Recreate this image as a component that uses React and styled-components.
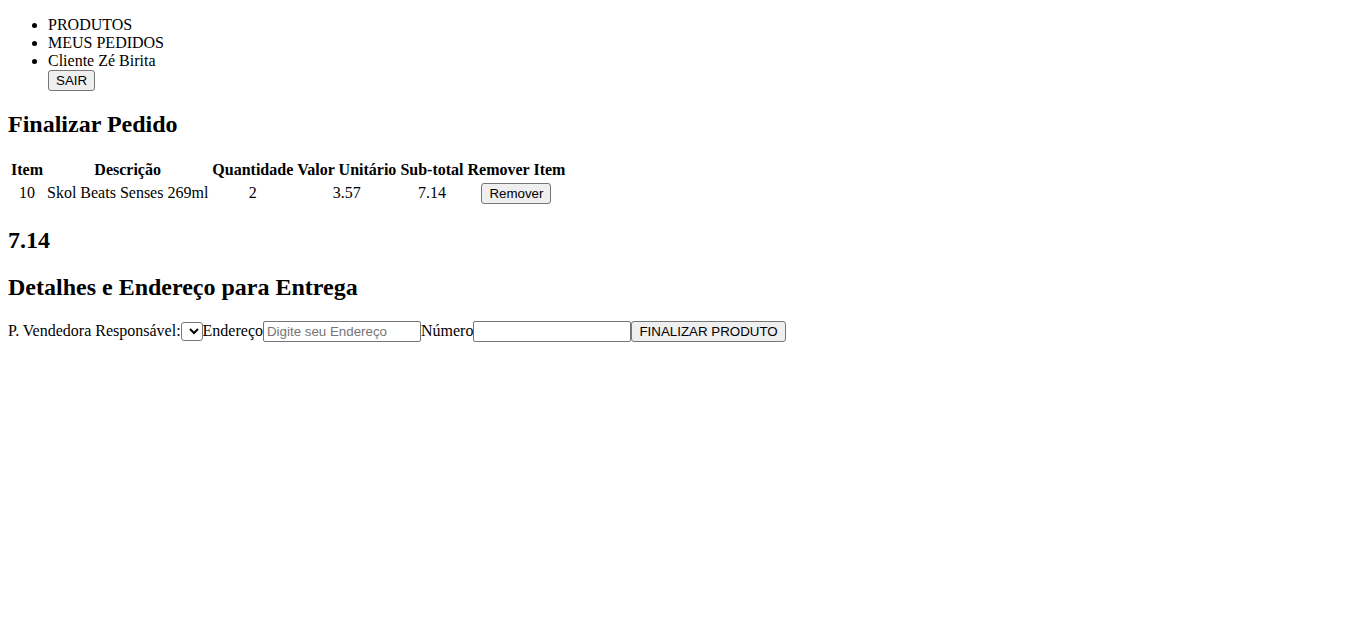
import React from 'react';
import styled, { createGlobalStyle } from 'styled-components';

const GlobalStyle = createGlobalStyle`
  body {
    margin: 8px;
    font-family: "Liberation Serif", "Times New Roman", serif;
    font-size: 16px;
    color: #000;
    background: #fff;
  }
`;

const NavList = styled.ul`
  margin: 8px 0 16px;
  padding-left: 40px;
  list-style: disc;
`;

const NavItem = styled.li`
  line-height: normal;
`;

const Button = styled.button`
  font-family: "Liberation Sans", Arial, sans-serif;
  font-size: 13.333px;
  padding: 2px 7px;
  color: #000;
  background: #efefef;
  border: 1px solid #767676;
  border-radius: 3px;
`;

const Title = styled.h2`
  font-size: 24px;
  font-weight: bold;
  margin: 19.92px 0;
`;

const Table = styled.table`
  border-spacing: 2px;
  border-collapse: separate;

  th {
    padding: 1px;
    font-weight: bold;
    text-align: center;
  }

  td {
    padding: 1px;
    text-align: center;
  }
`;

const Form = styled.div`
  display: block;
`;

const Select = styled.select`
  font-family: "Liberation Sans", Arial, sans-serif;
  font-size: 13.333px;
  border: 1px solid #767676;
  border-radius: 3px;
  background: #fff;
`;

const Input = styled.input`
  font-family: "Liberation Sans", Arial, sans-serif;
  font-size: 13.333px;
  width: 150px;
  padding: 2px 3px;
  border: 1px solid #767676;
  border-radius: 2px;
  &::placeholder {
    color: #757575;
  }
`;

const items = [
  { id: 10, description: 'Skol Beats Senses 269ml', quantity: 2, price: '3.57', subtotal: '7.14' },
];

const App = () => {
  return (
    <>
      <GlobalStyle />
      <NavList>
        <NavItem>PRODUTOS</NavItem>
        <NavItem>MEUS PEDIDOS</NavItem>
        <NavItem>
          Cliente Zé Birita
          <div>
            <Button type="button">SAIR</Button>
          </div>
        </NavItem>
      </NavList>
      <Title>Finalizar Pedido</Title>
      <Table>
        <thead>
          <tr>
            <th>Item</th>
            <th>Descrição</th>
            <th>Quantidade</th>
            <th>Valor Unitário</th>
            <th>Sub-total</th>
            <th>Remover Item</th>
          </tr>
        </thead>
        <tbody>
          {items.map(item => (
            <tr key={item.id}>
              <td>{item.id}</td>
              <td>{item.description}</td>
              <td>{item.quantity}</td>
              <td>{item.price}</td>
              <td>{item.subtotal}</td>
              <td>
                <Button type="button">Remover</Button>
              </td>
            </tr>
          ))}
        </tbody>
      </Table>
      <Title>7.14</Title>
      <Title>Detalhes e Endereço para Entrega</Title>
      <Form>
        <label htmlFor="seller">P. Vendedora Responsável:</label>
        <Select id="seller" />
        <label htmlFor="address">Endereço</label>
        <Input id="address" type="text" placeholder="Digite seu Endereço" />
        <label htmlFor="number">Número</label>
        <Input id="number" type="text" />
        <Button type="button">FINALIZAR PRODUTO</Button>
      </Form>
    </>
  );
};

export default App;
